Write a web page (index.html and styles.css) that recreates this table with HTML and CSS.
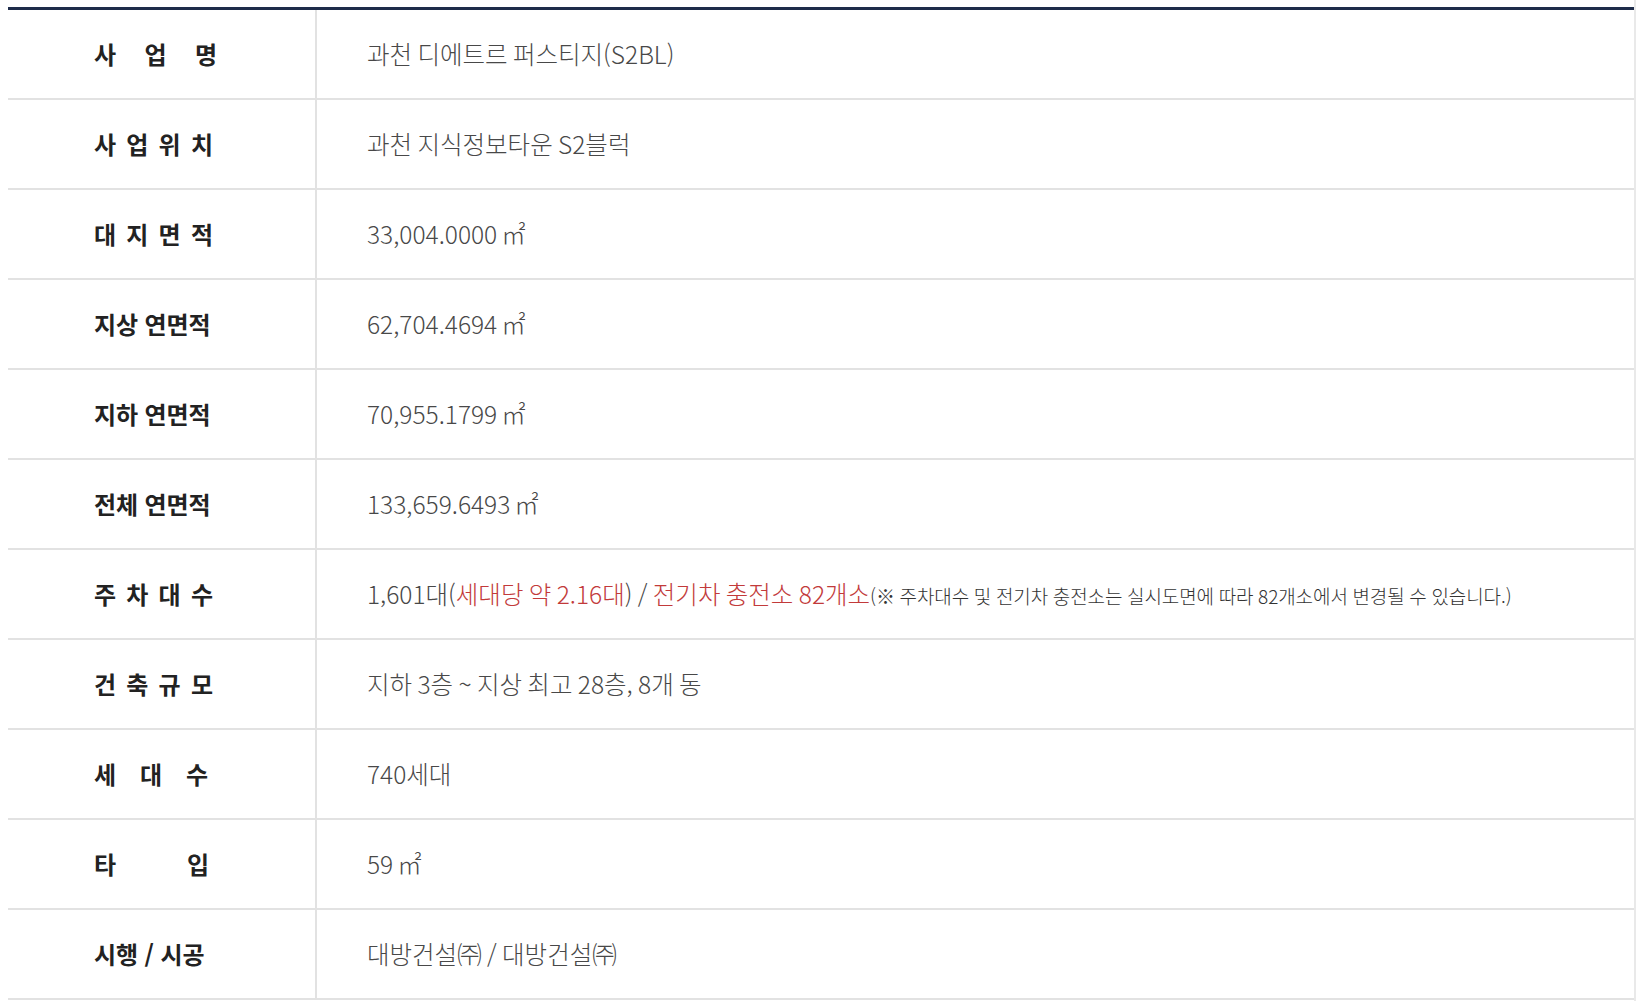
FILE: index.html
```html
<!DOCTYPE html>
<html lang="ko">
<head>
<meta charset="utf-8">
<title>사업개요</title>
<link rel="stylesheet" href="styles.css">
</head>
<body>
<div class="page">
  <table class="overview">
    <tbody>
      <tr><th><span class="lbl j w123">사 업 명</span></th><td>과천 디에트르 퍼스티지(S2BL)</td></tr>
      <tr><th><span class="lbl j w119">사 업 위 치</span></th><td>과천 지식정보타운 S2블럭</td></tr>
      <tr><th><span class="lbl j w119">대 지 면 적</span></th><td>33,004.0000 ㎡</td></tr>
      <tr><th><span class="lbl">지상 연면적</span></th><td>62,704.4694 ㎡</td></tr>
      <tr><th><span class="lbl">지하 연면적</span></th><td>70,955.1799 ㎡</td></tr>
      <tr><th><span class="lbl">전체 연면적</span></th><td>133,659.6493 ㎡</td></tr>
      <tr><th><span class="lbl j w119">주 차 대 수</span></th><td>1,601대(<span class="red">세대당 약 2.16대</span>) / <span class="red">전기차 충전소 82개소</span><span class="note">(※ 주차대수 및 전기차 충전소는 실시도면에 따라 82개소에서 변경될 수 있습니다.)</span></td></tr>
      <tr><th><span class="lbl j w119">건 축 규 모</span></th><td>지하 3층 ~ 지상 최고 28층, 8개 동</td></tr>
      <tr><th><span class="lbl j w114">세 대 수</span></th><td>740세대</td></tr>
      <tr><th><span class="lbl j w115">타 입</span></th><td>59 ㎡</td></tr>
      <tr><th><span class="lbl">시행 / 시공</span></th><td>대방건설㈜ / 대방건설㈜</td></tr>
    </tbody>
  </table>
</div>
</body>
</html>
```
FILE: styles.css
```css
html, body {
  margin: 0;
  padding: 0;
  background: #ffffff;
}
body {
  font-family: "Noto Sans CJK KR", "Noto Sans", sans-serif;
}
.page {
  width: 1636px;
  min-height: 1001px;
  border-right: 2px solid #e9e9e9;
  padding-top: 7px;
  box-sizing: border-box;
}
.overview {
  margin-left: 8px;
  width: 1626px;
  border-collapse: collapse;
  border-top: 3px solid #1e2c4a;
}
.overview tr {
  height: 90px;
  border-bottom: 2px solid #e2e2e2;
}
.overview th {
  width: 308px;
  padding: 0 0 0 86px;
  text-align: left;
  border-right: 2px solid #e2e2e2;
  font-weight: 700;
  font-size: 24px;
  color: #222222;
  box-sizing: border-box;
  letter-spacing: -0.1px;
}
.lbl {
  display: inline-block;
  white-space: nowrap;
}
.lbl.j {
  text-align: justify;
  text-align-last: justify;
  letter-spacing: 0;
}
.w123 { width: 123px; }
.w119 { width: 119px; }
.w114 { width: 114px; }
.w115 { width: 115px; }
.overview td {
  padding: 0 0 0 50px;
  font-weight: 300;
  font-size: 24.5px;
  color: #484848;
  letter-spacing: 0;
  word-spacing: -1.5px;
  white-space: nowrap;
}
.red {
  color: #c23a3a;
}
.note {
  font-size: 19px;
  color: #333333;
  letter-spacing: -0.1px;
  word-spacing: -0.5px;
}
```
